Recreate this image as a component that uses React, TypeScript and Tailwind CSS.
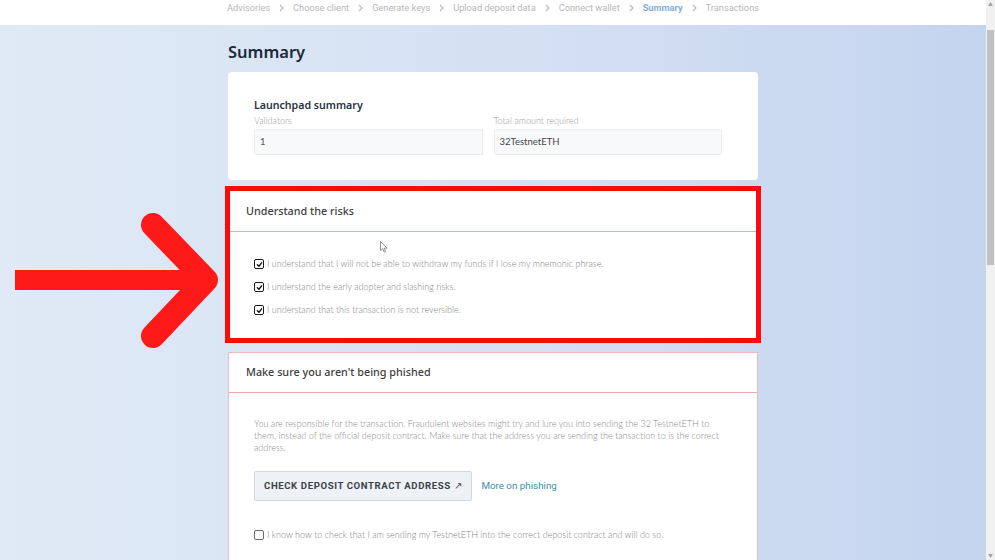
import React from "react";

const crumbs = [
  "Advisories",
  "Choose client",
  "Generate keys",
  "Upload deposit data",
  "Connect wallet",
  "Summary",
  "Transactions",
];

function Checked() {
  return (
    <span className="inline-flex h-[10px] w-[10px] shrink-0 items-center justify-center rounded-[2px] border-[1.5px] border-[#1a1a1a] bg-white">
      <svg width="7" height="7" viewBox="0 0 10 10">
        <path d="M2 5.5 L4.2 7.6 L8 2.6" fill="none" stroke="#111" strokeWidth="2" strokeLinecap="round" strokeLinejoin="round" />
      </svg>
    </span>
  );
}

function Unchecked() {
  return <span className="inline-block h-[10px] w-[10px] shrink-0 rounded-[2px] border border-[#6b6b6b] bg-white" />;
}

export default function App() {
  return (
    <div className="relative flex h-[560px] w-[995px] overflow-hidden" style={{ fontFamily: "Lato, 'Noto Sans', sans-serif" }}>
      <div className="flex min-w-0 flex-1 flex-col bg-gradient-to-r from-[#e0eaf6] via-[#d5e1f3] to-[#c5d4ef]">
        {/* header */}
        <div className="flex h-[25px] shrink-0 items-start bg-white pl-[227px] pt-[2px]">
          <div className="flex items-center whitespace-nowrap text-[9.25px] leading-[12px] text-[#b8b8b8]" style={{ fontFamily: "Roboto, sans-serif" }}>
            {crumbs.map((c, i) => (
              <React.Fragment key={c}>
                <span className={c === "Summary" ? "font-bold text-[#7fb0e0]" : ""}>{c}</span>
                {i < crumbs.length - 1 && (
                  <svg className="mx-[8px]" width="7" height="8" viewBox="0 0 7 8">
                    <path d="M2 1 L5 4 L2 7" fill="none" stroke="#b8b8b8" strokeWidth="1.1" />
                  </svg>
                )}
              </React.Fragment>
            ))}
          </div>
        </div>

        {/* content */}
        <div className="mx-auto flex w-[530px] flex-col">
          <h1 className="mt-[16px] h-[31px] text-[16.5px] font-semibold leading-[22px] text-[#1b2838]" style={{ fontFamily: "'Noto Sans', sans-serif" }}>
            Summary
          </h1>

          {/* Launchpad summary card */}
          <div className="h-[108px] rounded-[4px] bg-white px-[26px] pt-[26px]">
            <div className="text-[10.6px] font-semibold leading-[14px] text-[#283341]" style={{ fontFamily: "'Noto Sans', sans-serif" }}>
              Launchpad summary
            </div>
            <div className="mt-[3px] grid w-[468px] grid-cols-2 gap-x-[11px]">
              <div>
                <div className="text-[9px] font-light leading-[12px] text-[#9b9b9b]">Validators</div>
                <div className="mt-[2px] flex h-[26px] items-center rounded-[2px] border border-[#ececef] bg-[#f8f9fb] px-[5px] text-[9.5px] text-[#555]">1</div>
              </div>
              <div>
                <div className="text-[9px] font-light leading-[12px] text-[#9b9b9b]">Total amount required</div>
                <div className="mt-[2px] flex h-[26px] items-center rounded-[2px] border border-[#ececef] bg-[#f8f9fb] px-[5px] text-[9.5px] text-[#444]">32TestnetETH</div>
              </div>
            </div>
          </div>

          {/* Understand the risks — with red annotation frame */}
          <div className="-mx-[3px] mt-[6px] h-[157px] border-[5px] border-[#ff0a0a]">
            <div className="flex h-full flex-col bg-white">
              <div className="flex h-[40px] items-center pl-[16px] text-[10.8px] font-medium text-[#3e3e3e]" style={{ fontFamily: "'Noto Sans', sans-serif" }}>
                Understand the risks
              </div>
              <div className="h-px bg-[#f2a7b0]" />
              <div className="flex flex-col gap-[11px] pl-[24px] pt-[26px]">
                {[
                  "I understand that I will not be able to withdraw my funds if I lose my mnemonic phrase.",
                  "I understand the early adopter and slashing risks.",
                  "I understand that this transaction is not reversible.",
                ].map((t) => (
                  <div key={t} className="flex h-[12px] items-center gap-[3px] whitespace-nowrap text-[9px] font-light text-[#858585]">
                    <Checked />
                    <span>{t}</span>
                  </div>
                ))}
              </div>
            </div>
          </div>

          {/* Phishing card */}
          <div className="mt-[9px] h-[220px] border border-[#f3b7bf] bg-white">
            <div className="flex h-[39px] items-center pl-[17px] text-[10.8px] font-medium text-[#3e3e3e]" style={{ fontFamily: "'Noto Sans', sans-serif" }}>
              Make sure you aren't being phished
            </div>
            <div className="h-px bg-[#f2a7b0]" />
            <div className="px-[25px] pt-[25px]">
              <p className="whitespace-nowrap text-[9px] font-light leading-[12px] text-[#8a8a8a]">
                <span className="block">You are responsible for the transaction. Fraudulent websites might try and lure you into sending the 32 TestnetETH to</span>
                <span className="block">them, instead of the official deposit contract. Make sure that the address you are sending the tansaction to is the correct</span>
                <span className="block">address.</span>
              </p>
              <div className="mt-[17px] flex items-center">
                <div className="flex h-[30px] items-center justify-center whitespace-nowrap rounded-[2px] border border-[#d3d8de] bg-[#eef2f6] px-[9px] text-[9.6px] font-bold tracking-[0.6px] text-[#3b4148]" style={{ fontFamily: "Roboto, sans-serif" }}>
                  CHECK DEPOSIT CONTRACT ADDRESS <span className="ml-[3px] font-normal">↗</span>
                </div>
                <span className="ml-[9px] text-[9.8px] text-[#3e8fa5]" style={{ fontFamily: "Roboto, sans-serif" }}>
                  More on phishing
                </span>
              </div>
              <div className="mt-[28px] flex h-[12px] items-center gap-[3px] whitespace-nowrap text-[9px] font-light text-[#858585]">
                <Unchecked />
                <span>I know how to check that I am sending my TestnetETH into the correct deposit contract and will do so.</span>
              </div>
            </div>
          </div>
        </div>
      </div>

      {/* scrollbar */}
      <div className="relative flex w-[9px] shrink-0 flex-col items-center bg-[#f1f1f1]">
        <svg className="mt-[2px]" width="5" height="4" viewBox="0 0 5 4">
          <path d="M2.5 0 L5 4 L0 4 Z" fill="#a3a3a3" />
        </svg>
        <div className="mt-[24px] h-[235px] w-[7px] bg-[#c1c1c1]" />
        <div className="flex-1" />
        <svg className="mb-[2px]" width="5" height="4" viewBox="0 0 5 4">
          <path d="M0 0 L5 0 L2.5 4 Z" fill="#a3a3a3" />
        </svg>
      </div>

      {/* red annotation arrow */}
      <svg className="pointer-events-none absolute left-0 top-0" width="240" height="360" viewBox="0 0 240 360">
        <rect x="15" y="270" width="190" height="20" fill="#ff1a1a" />
        <path d="M153 225 L206 280 L153 336" fill="none" stroke="#ff1a1a" strokeWidth="24" strokeLinecap="round" strokeLinejoin="round" />
      </svg>

      {/* mouse cursor */}
      <svg className="pointer-events-none absolute left-[380px] top-[241px]" width="8" height="12" viewBox="0 0 8 12">
        <path d="M0.5 0.5 L0.5 9.5 L2.7 7.6 L4.2 11 L5.6 10.4 L4.2 7.1 L7.2 7.1 Z" fill="#fff" stroke="#777" strokeWidth="0.8" />
      </svg>
    </div>
  );
}
